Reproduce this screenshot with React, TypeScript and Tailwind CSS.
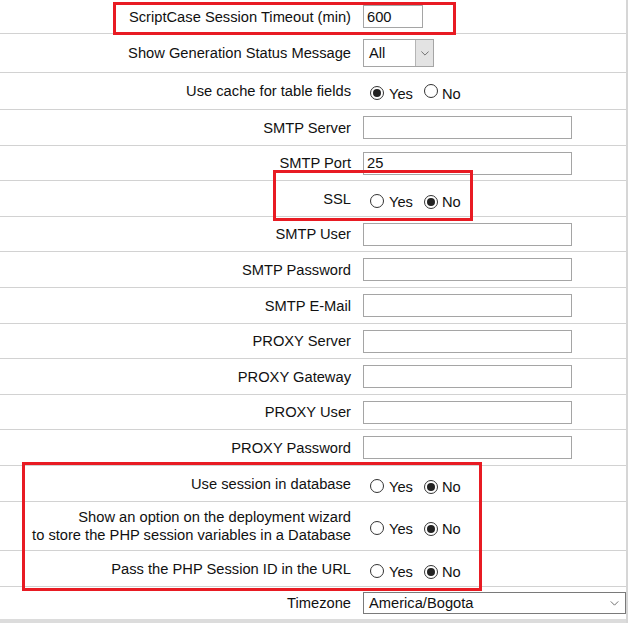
import React from "react";

type Row =
  | { kind: "text"; label: string; h: string; value?: string; w: string }
  | { kind: "radio"; label: React.ReactNode; h: string; yes: boolean }
  | { kind: "selectAll"; label: string; h: string }
  | { kind: "tz"; label: string; h: string };

const Radio = ({ checked }: { checked: boolean }) => (
  <span className="inline-flex h-[14px] w-[14px] items-center justify-center rounded-full border border-[#333] bg-white">
    {checked && <span className="h-[8px] w-[8px] rounded-full bg-[#222]" />}
  </span>
);

const YesNo = ({ yes }: { yes: boolean }) => (
  <div className="mt-[4px] flex items-center pl-[7px]">
    <Radio checked={yes} />
    <span className="ml-[5px] mt-[2px]">Yes</span>
    <span className="ml-[11px]">
      <Radio checked={!yes} />
    </span>
    <span className="ml-[4px] mt-[2px]">No</span>
  </div>
);

const rows: Row[] = [
  { kind: "text", label: "ScriptCase Session Timeout (min)", h: "h-[34px]", value: "600", w: "w-[60px]" },
  { kind: "selectAll", label: "Show Generation Status Message", h: "h-[39px]" },
  { kind: "radio", label: "Use cache for table fields", h: "h-[37px]", yes: true },
  { kind: "text", label: "SMTP Server", h: "h-[36px]", w: "w-[209px]" },
  { kind: "text", label: "SMTP Port", h: "h-[35px]", value: "25", w: "w-[209px]" },
  { kind: "radio", label: "SSL", h: "h-[36px]", yes: false },
  { kind: "text", label: "SMTP User", h: "h-[35px]", w: "w-[209px]" },
  { kind: "text", label: "SMTP Password", h: "h-[36px]", w: "w-[209px]" },
  { kind: "text", label: "SMTP E-Mail", h: "h-[36px]", w: "w-[209px]" },
  { kind: "text", label: "PROXY Server", h: "h-[35px]", w: "w-[209px]" },
  { kind: "text", label: "PROXY Gateway", h: "h-[36px]", w: "w-[209px]" },
  { kind: "text", label: "PROXY User", h: "h-[35px]", w: "w-[209px]" },
  { kind: "text", label: "PROXY Password", h: "h-[36px]", w: "w-[209px]" },
  { kind: "radio", label: "Use session in database", h: "h-[36px]", yes: false },
  {
    kind: "radio",
    label: (
      <>
        Show an option on the deployment wizard
        <br />
        to store the PHP session variables in a Database
      </>
    ),
    h: "h-[49px]",
    yes: false,
  },
  { kind: "radio", label: "Pass the PHP Session ID in the URL", h: "h-[36px]", yes: false },
  { kind: "tz", label: "Timezone", h: "h-[32px]" },
];

const Chevron = ({ cls }: { cls: string }) => (
  <svg className={cls} width="10" height="6" viewBox="0 0 10 6" fill="none">
    <path d="M0.5 0.5 L5 5 L9.5 0.5" stroke="#555" strokeWidth="1" />
  </svg>
);

export default function App() {
  return (
    <div className="relative h-[632px] w-[631px] overflow-hidden bg-white font-['Liberation_Sans',Arial,sans-serif] text-[14.7px] leading-[18px] text-[#111]">
      <div className="w-[628px] border-r-2 border-[#d6d6d6]">
        {rows.map((r, i) => (
          <div
            key={i}
            className={`flex items-center ${r.h} ${i === rows.length - 1 ? "" : "border-b border-[#d2d2d2]"}`}
          >
            <div className="w-[363px] shrink-0 pr-[12px] text-right">{r.label}</div>
            <div className="flex-1">
              {r.kind === "text" && (
                <div className={`flex h-[23px] items-center border border-[#a5a5a5] bg-white pl-[3px] ${r.w}`}>
                  {r.value}
                </div>
              )}
              {r.kind === "radio" && <YesNo yes={r.yes} />}
              {r.kind === "selectAll" && (
                <div className="flex h-[28px] w-[71px] border border-[#a5a5a5] bg-white">
                  <div className="flex flex-1 items-center pl-[5px]">All</div>
                  <div className="flex w-[18px] items-center justify-center border-l border-[#b5b5b5] bg-[#e3e3e3]">
                    <Chevron cls="h-[5px] w-[8px]" />
                  </div>
                </div>
              )}
              {r.kind === "tz" && (
                <div className="flex h-[22px] w-[263px] items-center justify-between border border-[#7a7a7a] bg-white pl-[5px] pr-[6px]">
                  <span>America/Bogota</span>
                  <Chevron cls="h-[5px] w-[9px]" />
                </div>
              )}
            </div>
          </div>
        ))}
        <div className="h-[4px] bg-[#dcdcdc]" />
      </div>

      {/* highlight boxes */}
      <div className="pointer-events-none absolute left-[113px] top-[2px] h-[33px] w-[343px] border-[3px] border-[#e81b23]" />
      <div className="pointer-events-none absolute left-[273px] top-[170px] h-[51px] w-[200px] border-[3px] border-[#e81b23]" />
      <div className="pointer-events-none absolute left-[22px] top-[462px] h-[129px] w-[460px] border-[3px] border-[#e81b23]" />
    </div>
  );
}
